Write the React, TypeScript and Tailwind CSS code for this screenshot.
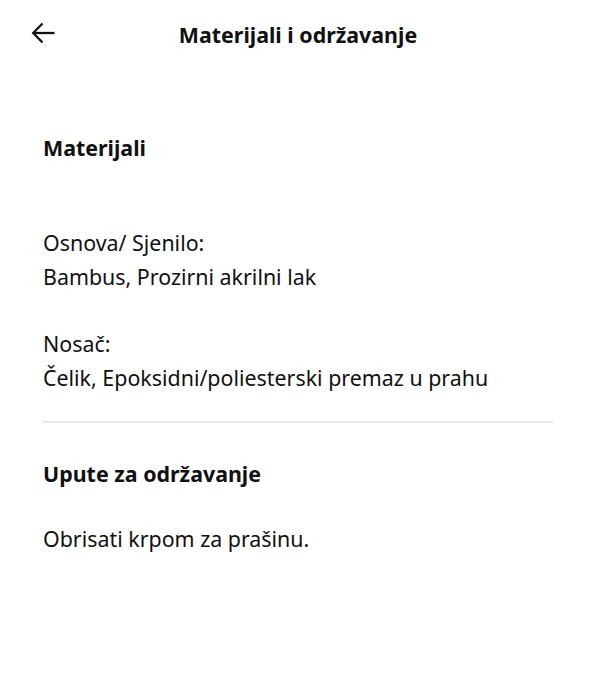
import React from "react";

export default function App() {
  return (
    <div className="w-[596px] h-[690px] bg-white text-[#111111]" style={{ fontFamily: '"Noto Sans", "Open Sans", sans-serif' }}>
      <header className="h-[70px] grid grid-cols-[1fr_auto_1fr] items-center">
        <div className="pl-[31px] pb-[4px] flex items-center">
          <svg width="24" height="24" viewBox="0 0 24 24" fill="none" stroke="#111111" strokeWidth="2.3" strokeLinecap="butt" strokeLinejoin="miter">
            <path d="M23.5 12H2.5" />
            <path d="M11.5 2.5L2.2 12l9.3 9.5" />
          </svg>
        </div>
        <h1 className="text-[21.4px] leading-[34px] font-bold">Materijali i održavanje</h1>
        <div />
      </header>
      <main className="px-[43px]">
        <h2 className="mt-[61px] text-[21.4px] leading-[34px] font-bold">Materijali</h2>
        <div className="mt-[61px] text-[21.4px] leading-[34px]">
          <p>Osnova/ Sjenilo:</p>
          <p>Bambus, Prozirni akrilni lak</p>
          <p className="mt-[33px]">Nosač:</p>
          <p>Čelik, Epoksidni/poliesterski premaz u prahu</p>
        </div>
        <div className="mt-[26px] h-[2px] bg-[#e6e6e6]" />
        <h2 className="mt-[34px] text-[21.4px] leading-[34px] font-bold">Upute za održavanje</h2>
        <p className="mt-[31px] text-[21.4px] leading-[34px]">Obrisati krpom za prašinu.</p>
      </main>
    </div>
  );
}
